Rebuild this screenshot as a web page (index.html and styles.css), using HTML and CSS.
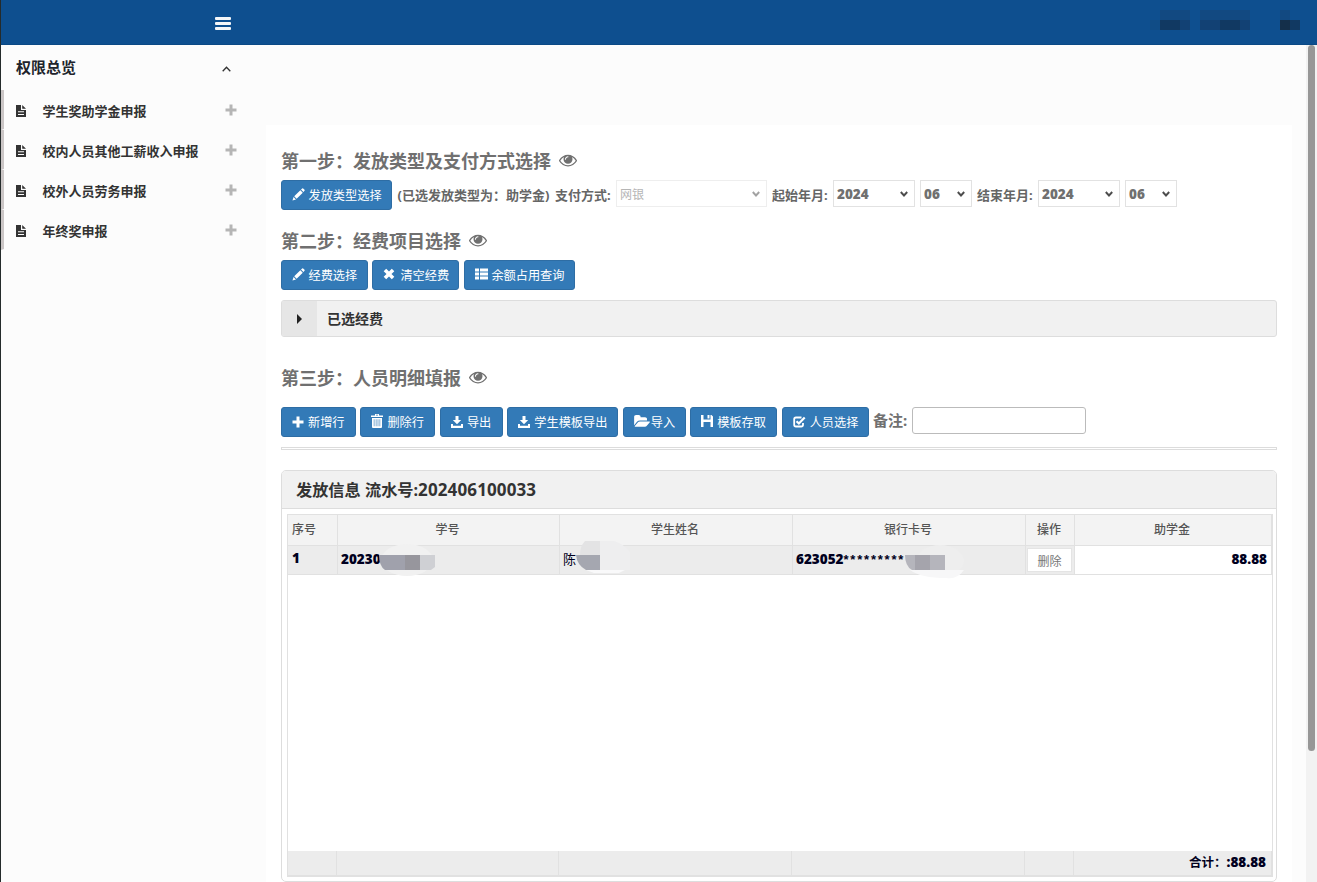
FILE: index.html
```
<!DOCTYPE html>
<html lang="zh-CN">
<head>
  <meta charset="utf-8">
  <title>学生奖助学金申报</title>
  <link rel="stylesheet" href="styles.css">
</head>
<body>
  <!-- Shared icons -->
  <svg class="icon-defs" aria-hidden="true">
    <symbol id="eye" viewBox="0 0 1792 1792"><path d="M1664 960q-152-236-381-353 61 104 61 225 0 185-131.5 316.5t-316.5 131.5-316.5-131.5-131.5-316.5q0-121 61-225-229 117-381 353 133 205 333.5 326.5t434.5 121.5 434.5-121.5 333.5-326.5zm-720-384q0-20-14-34t-34-14q-125 0-214.5 89.5t-89.5 214.5q0 20 14 34t34 14 34-14 14-34q0-86 61-147t147-61q20 0 34-14t14-34zm848 384q0 34-20 69-140 230-376.5 368.5t-499.5 138.5-499.5-139-376.5-368q-20-35-20-69t20-69q140-229 376.5-368t499.5-139 499.5 139 376.5 368q20 35 20 69z"/></symbol>
    <symbol id="file" viewBox="0 0 12 14"><path d="M1 1h5v5h5v7H1zM7.2 1 11 4.8H7.2zM3 7.3v1h6v-1zM3 10v1h6v-1z" fill-rule="evenodd"/></symbol>
    <symbol id="plus" viewBox="0 0 12 12"><path d="M4.5 .5h3v4h4v3h-4v4h-3v-4h-4v-3h4z"/></symbol>
    <symbol id="pencil" viewBox="0 0 14 14"><path d="M.5 13.500 1.700 9.700 4.300 12.300zM2.400 9 9 2.400 11.600 5 5 11.600zM9.700 1.700 11 .5q.5-.4 1 0l1.500 1.500q.4.500 0 1l-1.200 1.300z"/></symbol>
    <symbol id="remove" viewBox="0 0 12 12"><path d="M3.200.7 6 3.500 8.800.7 11.300 3.200 8.500 6 11.300 8.800 8.800 11.300 6 8.500 3.200 11.300.7 8.800 3.500 6 .7 3.200z"/></symbol>
    <symbol id="list" viewBox="0 0 13 12"><path d="M0 .5h4v3H0zM5 .5h8v3H5zM0 4.500h4v3H0zM5 4.500h8v3H5zM0 8.500h4v3H0zM5 8.500h8v3H5z"/></symbol>
    <symbol id="trash" viewBox="0 0 12 14"><path d="M4 0h4v1.500h4V3H0V1.500h4zM5 .8v.7h2V.8zM1 4h10v9q0 1-1 1H2q-1 0-1-1zM2.800 5.300v7h.6v-7zM4.800 5.300v7h.6v-7zM6.700 5.300v7h.6v-7zM8.600 5.300v7h.6v-7z" fill-rule="evenodd"/></symbol>
    <symbol id="download" viewBox="0 0 12 12"><path d="M4.500 0h3v4h2.700L6 8.300 1.800 4h2.700zM0 8h2v1.700h8V8h2v4H0z"/></symbol>
    <symbol id="folder" viewBox="0 0 1879 1792"><path d="M1879 952q0 31-31 66l-336 396q-43 51-120.5 86.5t-143.5 35.5h-1088q-34 0-60.5-13t-26.5-43q0-31 31-66l336-396q43-51 120.5-86.5t143.5-35.5h1088q34 0 60.5 13t26.5 43zm-343-344v160h-832q-94 0-197 47.5t-164 119.5l-337 396-5 6q0-4-.5-12.500t-.5-12.500v-960q0-92 66-158t158-66h320q92 0 158 66t66 158v32h544q92 0 158 66t66 158z"/></symbol>
    <symbol id="save" viewBox="0 0 12 12"><path d="M0 0h2.500v4.500h7V0h1L12 1.500V12H9.500V7h-7v5H0zM6.500 0h2v3.500h-2z"/></symbol>
    <symbol id="check" viewBox="0 0 13 12"><path d="M8.500 1.500H3Q1.200 1.500 1.200 3.300v5.400q0 1.800 1.800 1.800h5.200q1.800 0 1.800-1.800V7" fill="none" stroke="currentColor" stroke-width="1.800"/><path d="M3.500 5.200 5.900 7.500 11.700 1.500" fill="none" stroke="currentColor" stroke-width="2.200"/></symbol>
    <symbol id="arrow" viewBox="0 0 8 6"><path d="M.8 1 4 4.500 7.200 1" fill="none" stroke="currentColor" stroke-width="1.900"/></symbol>
  </svg>

  <!-- Top bar -->
  <header class="navbar">
    <div class="menu-toggle"><i></i><i></i><i></i></div>
    <svg class="user-info" width="150" height="20" shape-rendering="crispEdges">
      <path fill="#124981" d="M10 0h30v10H10zM50 0h50v10H50zM130 0h10v10h-10z"/>
      <path fill="#104c86" d="M0 10h10v10H0z"/>
      <path fill="#113962" d="M10 10h20v10H10zM70 10h20v10H70zM140 10h10v10h-10z"/>
      <path fill="#124174" d="M30 10h10v10H30zM50 10h20v10H50zM90 10h10v10H90z"/>
      <path fill="#142f4a" d="M130 10h10v10h-10z"/>
    </svg>
  </header>

  <div class="layout">
    <!-- Sidebar menu -->
    <aside class="sidebar">
      <div class="side-title">
        <span>权限总览</span>
        <svg width="9" height="6" viewBox="0 0 9 6"><path d="M.7 5.300 4.500 1.200 8.300 5.300" fill="none" stroke="#333" stroke-width="1.300"/></svg>
      </div>
      <ul class="menu">
        <li><svg class="file"><use href="#file"/></svg><span>学生奖助学金申报</span><svg class="plus"><use href="#plus"/></svg></li>
        <li><svg class="file"><use href="#file"/></svg><span>校内人员其他工薪收入申报</span><svg class="plus"><use href="#plus"/></svg></li>
        <li><svg class="file"><use href="#file"/></svg><span>校外人员劳务申报</span><svg class="plus"><use href="#plus"/></svg></li>
        <li><svg class="file"><use href="#file"/></svg><span>年终奖申报</span><svg class="plus"><use href="#plus"/></svg></li>
      </ul>
    </aside>

    <main class="content">
      <!-- Step 1 -->
      <h2>第一步：发放类型及支付方式选择<svg class="eye"><use href="#eye"/></svg></h2>
      <div class="form-row">
        <button class="btn wide"><svg class="pencil"><use href="#pencil"/></svg>发放类型选择</button>
        <span class="picked">(已选发放类型为：助学金)</span>
        <span class="pay-label">支付方式:</span>
        <div class="select pay">网银<svg><use href="#arrow"/></svg></div>
        <span class="date-label">起始年月:</span>
        <div class="select year">2024<svg><use href="#arrow"/></svg></div>
        <div class="select month">06<svg><use href="#arrow"/></svg></div>
        <span class="date-label">结束年月:</span>
        <div class="select year">2024<svg><use href="#arrow"/></svg></div>
        <div class="select month">06<svg><use href="#arrow"/></svg></div>
      </div>

      <!-- Step 2 -->
      <h2>第二步：经费项目选择<svg class="eye"><use href="#eye"/></svg></h2>
      <div class="btn-row">
        <button class="btn mid"><svg class="pencil"><use href="#pencil"/></svg>经费选择</button>
        <button class="btn mid"><svg class="remove"><use href="#remove"/></svg>清空经费</button>
        <button class="btn wide"><svg class="list"><use href="#list"/></svg>余额占用查询</button>
      </div>
      <div class="fund-bar">
        <div class="fund-toggle"><i></i></div>
        <span>已选经费</span>
      </div>

      <!-- Step 3 -->
      <h2 class="step-three">第三步：人员明细填报<svg class="eye"><use href="#eye"/></svg></h2>
      <div class="btn-row tools">
        <button class="btn small"><svg><use href="#plus"/></svg>新增行</button>
        <button class="btn small"><svg class="trash"><use href="#trash"/></svg>删除行</button>
        <button class="btn tiny"><svg><use href="#download"/></svg>导出</button>
        <button class="btn wide"><svg><use href="#download"/></svg>学生模板导出</button>
        <button class="btn tiny"><svg class="folder"><use href="#folder"/></svg>导入</button>
        <button class="btn mid"><svg class="save"><use href="#save"/></svg>模板存取</button>
        <button class="btn mid"><svg class="check"><use href="#check"/></svg>人员选择</button>
        <label class="remark" for="remark">备注:</label>
        <input class="remark-input" id="remark" type="text">
      </div>
      <div class="divider"></div>

      <!-- Payment details -->
      <section class="panel">
        <h3>发放信息 流水号:<span>202406100033</span></h3>
        <div class="table">
          <div class="row head">
            <div class="index">序号</div><div>学号</div><div>学生姓名</div><div>银行卡号</div><div>操作</div><div>助学金</div>
          </div>
          <div class="row data">
            <div class="index num">1</div>
            <div class="num">20230
              <svg class="mask id-mask" width="56" height="34"><ellipse cx="28" cy="17" rx="26" ry="16" fill="#f1f1f1"/><path fill="#a0a1ac" d="M0 12h26v15H6Q0 23 0 12z"/><path fill="#97969d" d="M26 12h15v15H26z"/><path fill="#cfd0d4" d="M41 12h15v12l-4 3H41z"/></svg>
            </div>
            <div class="name">陈
              <svg class="mask name-mask" width="54" height="34"><path fill="#eeeeef" d="M24 1h14q10 3 16 11v18H24z"/><path fill="#e3e3e4" d="M9 1h15v14H4Q4 6 9 1z"/><path fill="#a5a7b0" d="M0 15h24v15H10Q1 25 0 15z"/><path fill="#f9f9fa" d="M10 30h39l-6 3H18z"/></svg>
            </div>
            <div class="num card">623052<span class="stars">*********</span>
              <svg class="mask card-mask" width="60" height="36"><ellipse cx="35" cy="17" rx="24" ry="16" fill="#eee"/><path fill="#b5b5bc" d="M0 11h40v15H7Q0 22 0 11z"/><path fill="#a5a4ac" d="M10 11h15v15H10z"/><path fill="#f7f7f8" d="M5 26h54q-7 10-18 8-25 0-36-8z"/></svg>
            </div>
            <div class="action"><button>删除</button></div>
            <div class="num amount">88.88</div>
          </div>
          <div class="table-space"></div>
          <div class="row foot">
            <div></div><div></div><div></div><div></div><div></div><div class="total">合计：<span class="num">:88.88</span></div>
          </div>
        </div>
      </section>
    </main>

    <div class="scrollbar"><i></i></div>
  </div>
</body>
</html>
```
FILE: styles.css
```
* {
  box-sizing: border-box;
}

/* Body style */
body {
  margin: 0;
  height: 882px;
  overflow: hidden;
  border-left: 1px solid #252b2b;
  background: #fcfcfc;
  color: #333;
  font: 13px "Noto Sans", "Noto Sans CJK SC", sans-serif;
}

svg {
  fill: currentColor;
  flex: none;
}

.icon-defs {
  display: none;
}

/* Top bar */
.navbar {
  height: 45px;
  display: flex;
  justify-content: space-between;
  background: #0e4f8f;
  border-bottom: 1px solid #0b4985;
}

.menu-toggle {
  width: 16px;
  margin: 17px 0 0 214px;
}

.menu-toggle i {
  display: block;
  height: 3px;
  margin-bottom: 2px;
  border-radius: 1px;
  background: #f4f6f8;
}

.user-info {
  margin: 10px 17px 0 0;
}

.layout {
  display: flex;
  height: 837px;
}

/* Sidebar */
.sidebar {
  width: 265px;
  flex: none;
}

.side-title {
  height: 45px;
  display: flex;
  align-items: center;
  justify-content: space-between;
  padding: 0 35px 0 15px;
  color: #20232b;
  font-size: 15px;
  font-weight: 700;
}

.side-title span {
  line-height: 45px;
}

.side-title svg {
  margin-top: 3px;
}

.menu {
  list-style: none;
  margin: 0;
  padding: 0;
}

.menu li {
  height: 40px;
  display: flex;
  align-items: center;
  border-left: 3px solid #cbc6c6;
  border-bottom: 1px solid #fcfcfc;
  padding: 2px 29px 0 11px;
  font-weight: 700;
}

.menu span {
  flex: 1;
}

.menu .file {
  width: 12px;
  height: 14px;
  margin-right: 15.500px;
}

.menu .plus {
  width: 12px;
  height: 12px;
  margin-top: -2px;
  color: #b5b5b5;
}

/* Main area */
.content {
  width: 1026px;
  flex: none;
  margin-top: 80px;
  padding: 21px 15px 0;
  background: #fff;
}

h2 {
  display: flex;
  align-items: center;
  height: 30px;
  margin: 0;
  padding-bottom: 3px;
  color: #707070;
  font-size: 18px;
  font-weight: 700;
}

.eye {
  width: 18px;
  height: 18px;
  margin: 1px 0 0 8px;
}

.form-row,
.btn-row {
  display: flex;
}

.form-row {
  height: 30px;
  margin: 4px 0 16px;
  color: #666;
  font-weight: 700;
  line-height: 30px;
  white-space: nowrap;
}

.picked {
  width: 157.500px;
  margin-left: 5.500px;
}

.pay-label {
  width: 61px;
}

.date-label {
  width: 56px;
  margin: 0 5px;
}

.select {
  height: 27px;
  display: flex;
  align-items: center;
  justify-content: space-between;
  padding: 0 6px 0 3px;
  border: 1px solid #e2e2e2;
  background: #fff;
  color: #707070;
  font: 800 13.500px "Open Sans", sans-serif;
}

.select svg {
  width: 8px;
  height: 6px;
  margin-top: 1px;
  color: #4c4c4c;
}

.pay {
  width: 151px;
  padding-bottom: 1px;
  border-color: #eee;
  color: #b5b5b5;
  font: 12px "Noto Sans CJK SC", sans-serif;
}

.pay svg {
  color: #a2a2a2;
}

.year {
  width: 82px;
}

.month {
  width: 52px;
}

.year + .month {
  margin-left: 5px;
}

/* Blue buttons */
.btn {
  height: 30px;
  display: flex;
  align-items: center;
  padding: 0 0 0 10px;
  border: 1px solid #2e6da4;
  border-radius: 3px;
  background: #337ab7;
  color: #fff;
  font: 12.2px "Noto Sans", "Noto Sans CJK SC", sans-serif;
  white-space: nowrap;
}

.btn svg {
  width: 12px;
  height: 12px;
  margin: -1px 4px 0 0;
}

.btn .pencil {
  width: 13px;
  height: 13px;
  margin: -2px 3.500px 0 0;
}

.btn .remove {
  margin: -3px 5px 0 0;
}

.btn .list {
  width: 13px;
  margin: -3px 3.500px 0 0;
}

.btn .trash {
  height: 14px;
  margin-top: -3px;
}

.btn .save {
  margin-top: -3px;
}

.btn .check {
  width: 13px;
}

.btn .folder {
  width: 16px;
  height: 15px;
  margin-right: 1px;
}

.wide {
  width: 111px;
}

.mid {
  width: 87px;
}

.small {
  width: 75px;
}

.tiny {
  width: 63px;
}

.btn-row {
  gap: 4.450px;
  margin-top: 4px;
}

/* Selected fund bar */
.fund-bar {
  height: 37px;
  display: flex;
  align-items: center;
  margin-top: 10px;
  overflow: hidden;
  border: 1px solid #ddd;
  border-radius: 3px;
  background: #f1f1f1;
  font-size: 14px;
  font-weight: 700;
}

.fund-bar span {
  padding-bottom: 2px;
}

.fund-toggle {
  width: 35px;
  height: 35px;
  margin-right: 10px;
  padding: 13px 0 0 15px;
  background: #e6e6e6;
}

.fund-toggle i {
  display: block;
  width: 0;
  border: 5px solid transparent;
  border-left-color: #222;
  border-right-width: 0;
}

.step-three {
  margin-top: 26px;
}

.tools {
  height: 30px;
  margin-top: 14px;
}

.remark {
  width: 34px;
  color: #707070;
  font-size: 15px;
  font-weight: 700;
  line-height: 27px;
  white-space: nowrap;
}

.remark-input {
  width: 174px;
  height: 27px;
  border: 1px solid #bbb;
  border-radius: 3px;
}

.divider {
  height: 3px;
  margin-top: 10px;
  border: 1px solid #dcdcdc;
}

/* Detail panel */
.panel {
  height: 412px;
  margin-top: 20px;
  overflow: hidden;
  border: 1px solid #ddd;
  border-radius: 5px;
}

.panel h3 {
  height: 38px;
  margin: 0;
  padding-left: 14px;
  border-bottom: 1px solid #ddd;
  background: #f1f1f1;
  font-size: 16.200px;
  font-weight: 700;
  line-height: 37px;
}

.panel h3 span {
  font-size: 17px;
  letter-spacing: .12px;
}

.table {
  width: 986px;
  height: 363px;
  margin: 5px 0 0 5px;
  border: 1px solid #e1e1e1;
}

.row {
  display: grid;
  grid-template-columns: 50px 222px 233px 233px 49px 197px;
}

.row > div {
  position: relative;
  border-right: 1px solid #e1e1e1;
  border-bottom: 1px solid #e1e1e1;
}

.head {
  height: 31px;
  background: #f3f3f3;
  color: #555;
  font-size: 12px;
  font-weight: 500;
  line-height: 30px;
  text-align: center;
}

.head > div {
  padding-right: 2px;
}

.head .index {
  padding-left: 4px;
  text-align: left;
}

.data {
  height: 29px;
  background: #ececec;
  color: #000020;
  line-height: 27px;
}

.data > div {
  padding-left: 3px;
}

.num {
  font-family: "Open Sans", sans-serif;
  font-weight: 800;
}

.data .num {
  font-size: 13.500px;
}

.data .index {
  padding-left: 4px;
  line-height: 24px;
}

.stars {
  font: 700 13px "Liberation Sans", sans-serif;
  letter-spacing: 1.800px;
}

/* Mosaic over private data */
.mask {
  position: absolute;
  z-index: 1;
}

.id-mask {
  left: 41px;
  top: -3px;
}

.name-mask {
  left: 16px;
  top: -6px;
}

.card-mask {
  left: 112px;
  top: -2px;
}

.data .action {
  padding: 2px 0 0 1px;
}

.action button {
  display: block;
  width: 45px;
  height: 24px;
  padding: 0;
  border: 1px solid #e4e4e4;
  background: #fff;
  color: #777;
  font: 12px "Noto Sans CJK SC", sans-serif;
}

.data .amount {
  padding-right: 4px;
  background: #fff;
  text-align: right;
}

.table-space {
  height: 276px;
}

.foot {
  height: 25px;
  grid-template-columns: 49px 222px 233px 233px 49px 198px;
  background: #ececec;
  color: #000020;
  font-size: 12.500px;
  font-weight: 700;
  line-height: 22px;
}

.foot .total {
  padding-right: 5px;
  text-align: right;
}

.foot .num {
  font-size: 13.500px;
}

/* Page scrollbar */
.scrollbar {
  width: 11px;
  margin-left: auto;
  padding-left: 2px;
  background: #f2f2f2;
}

.scrollbar i {
  display: block;
  width: 7px;
  height: 706px;
  border-radius: 4px;
  background: #979797;
}
```
